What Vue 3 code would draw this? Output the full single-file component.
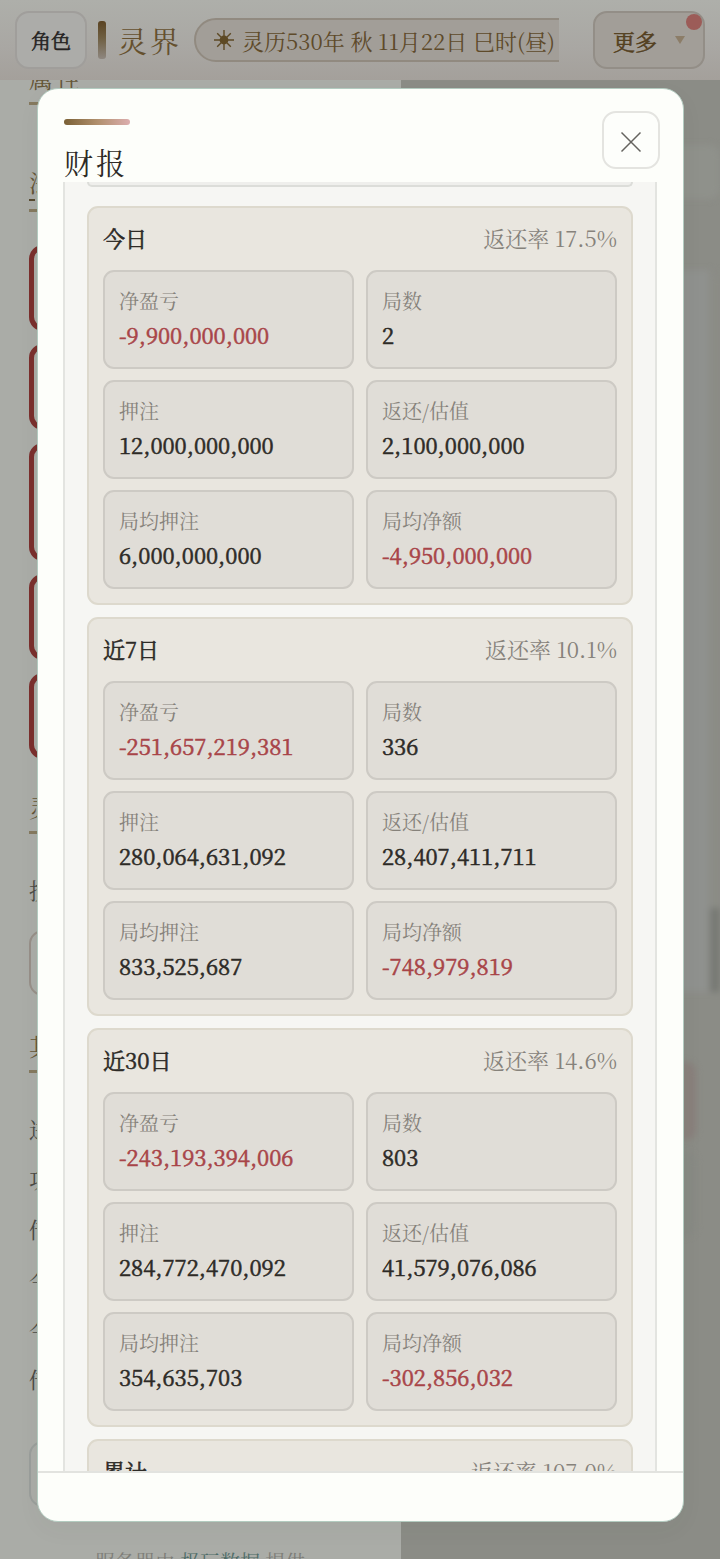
<script setup>
import { ref } from 'vue'

const open = ref(true)

const periods = [
  { name: '今日', rate: '17.5%', net: '-9,900,000,000', rounds: '2', bet: '12,000,000,000', back: '2,100,000,000', avgBet: '6,000,000,000', avgNet: '-4,950,000,000' },
  { name: '近7日', rate: '10.1%', net: '-251,657,219,381', rounds: '336', bet: '280,064,631,092', back: '28,407,411,711', avgBet: '833,525,687', avgNet: '-748,979,819' },
  { name: '近30日', rate: '14.6%', net: '-243,193,394,006', rounds: '803', bet: '284,772,470,092', back: '41,579,076,086', avgBet: '354,635,703', avgNet: '-302,856,032' }
]

const fields = [
  { key: 'net', label: '净盈亏' },
  { key: 'rounds', label: '局数' },
  { key: 'bet', label: '押注' },
  { key: 'back', label: '返还/估值' },
  { key: 'avgBet', label: '局均押注' },
  { key: 'avgNet', label: '局均净额' }
]

const isLoss = (value) => value.startsWith('-')
</script>

<template>
  <div class="page">
    <header class="topbar">
      <button class="role">角色</button>
      <span class="mark"></span>
      <h1 class="brand">灵界</h1>
      <div class="clock-wrap">
        <div class="clock">
          <svg class="sun" viewBox="0 0 20 20" width="20" height="20">
            <circle cx="10" cy="10" r="4.4" fill="#5e4a25" />
            <path d="M10 0v20M0 10h20M3.2 3.2l13.6 13.6M3.2 16.8L16.8 3.2" stroke="#5e4a25" stroke-width="1.4" />
          </svg>
          <span>灵历530年 秋 11月22日 巳时(昼)</span>
        </div>
      </div>
      <button class="more">
        更多
        <svg viewBox="0 0 10 8" width="10" height="8"><path d="M0 0h10L5 8z" fill="#8c7d68" /></svg>
        <span class="dot"></span>
      </button>
    </header>

    <div class="content">
      <aside class="side">
        <h2 class="side-title first">属性</h2>
        <h2 class="side-title dashed"><span>法</span></h2>
        <div class="slots">
          <div class="slot"></div>
          <div class="slot"></div>
          <div class="slot tall"></div>
          <div class="slot"></div>
          <div class="slot"></div>
        </div>
        <h2 class="side-title">灵</h2>
        <p class="line skill">技</p>
        <div class="box"></div>
        <h2 class="side-title">其</h2>
        <div class="lines">
          <p class="line">进</p>
          <p class="line">功</p>
          <p class="line">传</p>
          <p class="line">今</p>
          <p class="line">今</p>
          <p class="line">传</p>
        </div>
        <div class="box grey"></div>
        <p class="credit">服务器由 <a href="#">极玩数据</a> 提供</p>
      </aside>
      <main class="stage">
        <div class="shape bar"></div>
        <div class="shape board"><i></i></div>
        <div class="shape pink"></div>
        <div class="shape faint"></div>
      </main>
    </div>

    <div v-if="open" class="overlay">
      <section class="modal" role="dialog" aria-labelledby="report-title">
        <div class="modal-head">
          <div>
            <div class="accent"></div>
            <h2 id="report-title" class="modal-title">财报</h2>
          </div>
          <button class="close" aria-label="关闭" @click="open = false">
            <svg viewBox="0 0 22 22" width="22" height="22"><path d="M1.5 1.5l19 19M20.5 1.5l-19 19" stroke="#65635f" stroke-width="1.5" /></svg>
          </button>
        </div>
        <div class="modal-body">
          <div class="panel">
            <div class="prev"></div>
            <article v-for="p in periods" :key="p.name" class="card">
              <div class="card-head">
                <h3>{{ p.name }}</h3>
                <span class="rate">返还率 {{ p.rate }}</span>
              </div>
              <dl class="grid">
                <div v-for="f in fields" :key="f.key" class="tile">
                  <dt>{{ f.label }}</dt>
                  <dd :class="{ loss: isLoss(p[f.key]) }">{{ p[f.key] }}</dd>
                </div>
              </dl>
            </article>
            <article class="card">
              <div class="card-head">
                <h3>累计</h3>
                <span class="rate">返还率 107.0%</span>
              </div>
            </article>
          </div>
        </div>
        <div class="modal-foot"></div>
      </section>
    </div>
  </div>
</template>

<style>
body {
  margin: 0;
  background: #8b8c86;
}
</style>

<style scoped>
* {
  box-sizing: border-box;
}

.page {
  position: relative;
  display: flex;
  flex-direction: column;
  height: 100vh;
  overflow: hidden;
  font-family: "Noto Serif CJK SC", "Noto Serif SC", "Source Han Serif SC", "Liberation Serif", "Noto Sans CJK SC", serif;
  color: #2d2a26;
}

h1, h2, h3, p, dl, dd {
  margin: 0;
}

button {
  font-family: inherit;
  cursor: pointer;
}

.topbar {
  display: flex;
  align-items: center;
  flex: none;
  height: 80px;
  padding: 0 15px;
  background: linear-gradient(#aeafaa, #a9a7a3 60%, #a4a09b);
}

.role {
  width: 72px;
  height: 58px;
  padding: 0;
  border: 2px solid #a09e9b;
  border-radius: 14px;
  background: #acaca9;
  color: #24221f;
  font-size: 20px;
  -webkit-text-stroke: 0.025em;
}

.mark {
  width: 8px;
  height: 38px;
  margin: 0 12px 0 11px;
  border-radius: 3px;
  background: linear-gradient(#5a4322, #6f5f42 45%, #8e8780);
}

.brand {
  font-size: 29px;
  font-weight: 400;
  letter-spacing: 3px;
  white-space: nowrap;
  color: #65502e;
}

.clock-wrap {
  flex: 1;
  min-width: 0;
  margin: 0 34px 0 12px;
  overflow: hidden;
}

.clock {
  display: flex;
  align-items: center;
  gap: 8px;
  width: 400px;
  height: 44px;
  padding-left: 18px;
  border: 2px solid #918a80;
  border-radius: 22px;
  background: #a29e98;
  color: #5e4a2a;
  font-size: 22px;
  white-space: nowrap;
}

.more {
  position: relative;
  display: flex;
  align-items: center;
  justify-content: space-between;
  flex: none;
  width: 112px;
  height: 58px;
  padding: 0 18px;
  border: 2px solid #938e87;
  border-radius: 14px;
  background: #a29e98;
  color: #54401f;
  font-size: 22px;
  -webkit-text-stroke: 0.025em;
}

.dot {
  position: absolute;
  top: 1px;
  right: 1px;
  width: 16px;
  height: 16px;
  border-radius: 50%;
  background: #9c5c58;
}

.content {
  display: flex;
  flex: 1;
  min-height: 0;
}

.side {
  width: 401px;
  padding-left: 29px;
  overflow: hidden;
  background: #aaaca7;
}

.side-title {
  width: 110px;
  height: 50px;
  border-bottom: 3px solid #85795f;
  font-size: 24px;
  font-weight: 400;
  line-height: 46px;
  letter-spacing: 3px;
  color: #655637;
}

.first {
  margin-top: -25px;
}

.dashed {
  margin-top: 57px;
  line-height: 40px;
}

.dashed span {
  display: block;
  height: 39px;
  border-bottom: 2px dashed #574a30;
}

.slots {
  display: flex;
  flex-direction: column;
  gap: 13px;
  padding: 33px 0 25px;
}

.slot {
  width: 340px;
  height: 86px;
  border: 5px solid #7a2f2d;
  border-radius: 14px;
}

.tall {
  height: 118px;
}

.line {
  height: 50px;
  font-size: 22px;
  line-height: 50px;
  color: #4b4a45;
}

.skill {
  margin: 31px 0 15px;
}

.box {
  width: 340px;
  height: 66px;
  margin-bottom: 27px;
  border: 2px solid #978f88;
  border-radius: 14px;
}

.lines {
  padding: 31px 0 37px;
}

.grey {
  margin-bottom: 36px;
  border-color: #9a9e9b;
}

.credit {
  padding-left: 66px;
  font-size: 20px;
  line-height: 38px;
  color: #7d7d77;
}

.credit a {
  color: #4f6c68;
  text-decoration: none;
}

.stage {
  display: flex;
  flex-direction: column;
  flex: 1;
  padding-top: 65px;
  overflow: hidden;
  background: #8b8c86;
}

.shape {
  border-radius: 10px;
  filter: blur(3px);
}

.bar {
  height: 54px;
  background: #8f918b;
}

.board {
  display: flex;
  align-items: flex-end;
  justify-content: flex-end;
  height: 722px;
  margin-top: 71px;
  background: linear-gradient(90deg, #8f918e 96%, #8b8c86 97%);
}

.board i {
  width: 10px;
  height: 84px;
  background: #777974;
}

.pink {
  height: 78px;
  margin: 70px 24px 0 0;
  background: #89807b;
}

.faint {
  height: 84px;
  margin: 12px 24px 0 0;
  background: #888a84;
}

.overlay {
  position: absolute;
  inset: 0;
  padding: 88px 36px 37px 37px;
}

.modal {
  display: flex;
  flex-direction: column;
  height: 100%;
  overflow: hidden;
  border: 1px solid #b3cbc0;
  border-radius: 21px;
  background: #fdfefa;
  box-shadow: 0 8px 24px rgba(60, 64, 58, 0.04);
}

.modal-head {
  display: flex;
  justify-content: space-between;
  flex: none;
  height: 93px;
  padding: 22px 23px 0 26px;
}

.accent {
  width: 66px;
  height: 6px;
  margin-top: 8px;
  border-radius: 3px;
  background: linear-gradient(90deg, #7a6035, #b08f6c 50%, #dcaeae);
}

.modal-title {
  margin-top: 17px;
  font-size: 29px;
  font-weight: 400;
  line-height: 42px;
  letter-spacing: 3px;
}

.close {
  display: flex;
  align-items: center;
  justify-content: center;
  width: 58px;
  height: 58px;
  padding: 4px 0 0;
  border: 2px solid #e4e4e0;
  border-radius: 14px;
  background: #fdfefb;
}

.modal-body {
  flex: 1;
  min-height: 0;
  padding: 0 26px 0 25px;
  overflow: hidden;
}

.panel {
  display: flex;
  flex-direction: column;
  gap: 12px;
  padding: 0 22px;
  border: solid #e3e4e0;
  border-width: 0 2px;
  background: #f6f6f3;
}

.prev {
  height: 5px;
  margin-bottom: 7px;
  border: 2px solid #dcddd9;
  border-top: 0;
  border-radius: 0 0 10px 10px;
  background: #efefec;
}

.card {
  padding: 0 14px 14px;
  border: 2px solid #ddd9cd;
  border-radius: 11px;
  background: #e9e6df;
}

.card-head {
  display: flex;
  align-items: center;
  justify-content: space-between;
  height: 58px;
  margin-bottom: 4px;
}

.card-head h3 {
  font-size: 22px;
  font-weight: 400;
  -webkit-text-stroke: 0.025em;
}

.rate {
  font-size: 22px;
  color: #86827b;
}

.grid {
  display: grid;
  grid-template-columns: 1fr 1fr;
  gap: 11px 12px;
}

.tile {
  padding: 14px 14px 15px;
  border: 2px solid #cdcac4;
  border-radius: 11px;
  background: #e0ddd7;
}

dt {
  font-size: 20px;
  line-height: 30px;
  color: #86827b;
}

dd {
  margin-top: 2px;
  font-size: 22px;
  line-height: 34px;
  -webkit-text-stroke: 0.025em;
}

.loss {
  color: #a84448;
}

.modal-foot {
  flex: none;
  height: 50px;
  border-top: 2px solid #e2e3df;
}
</style>
